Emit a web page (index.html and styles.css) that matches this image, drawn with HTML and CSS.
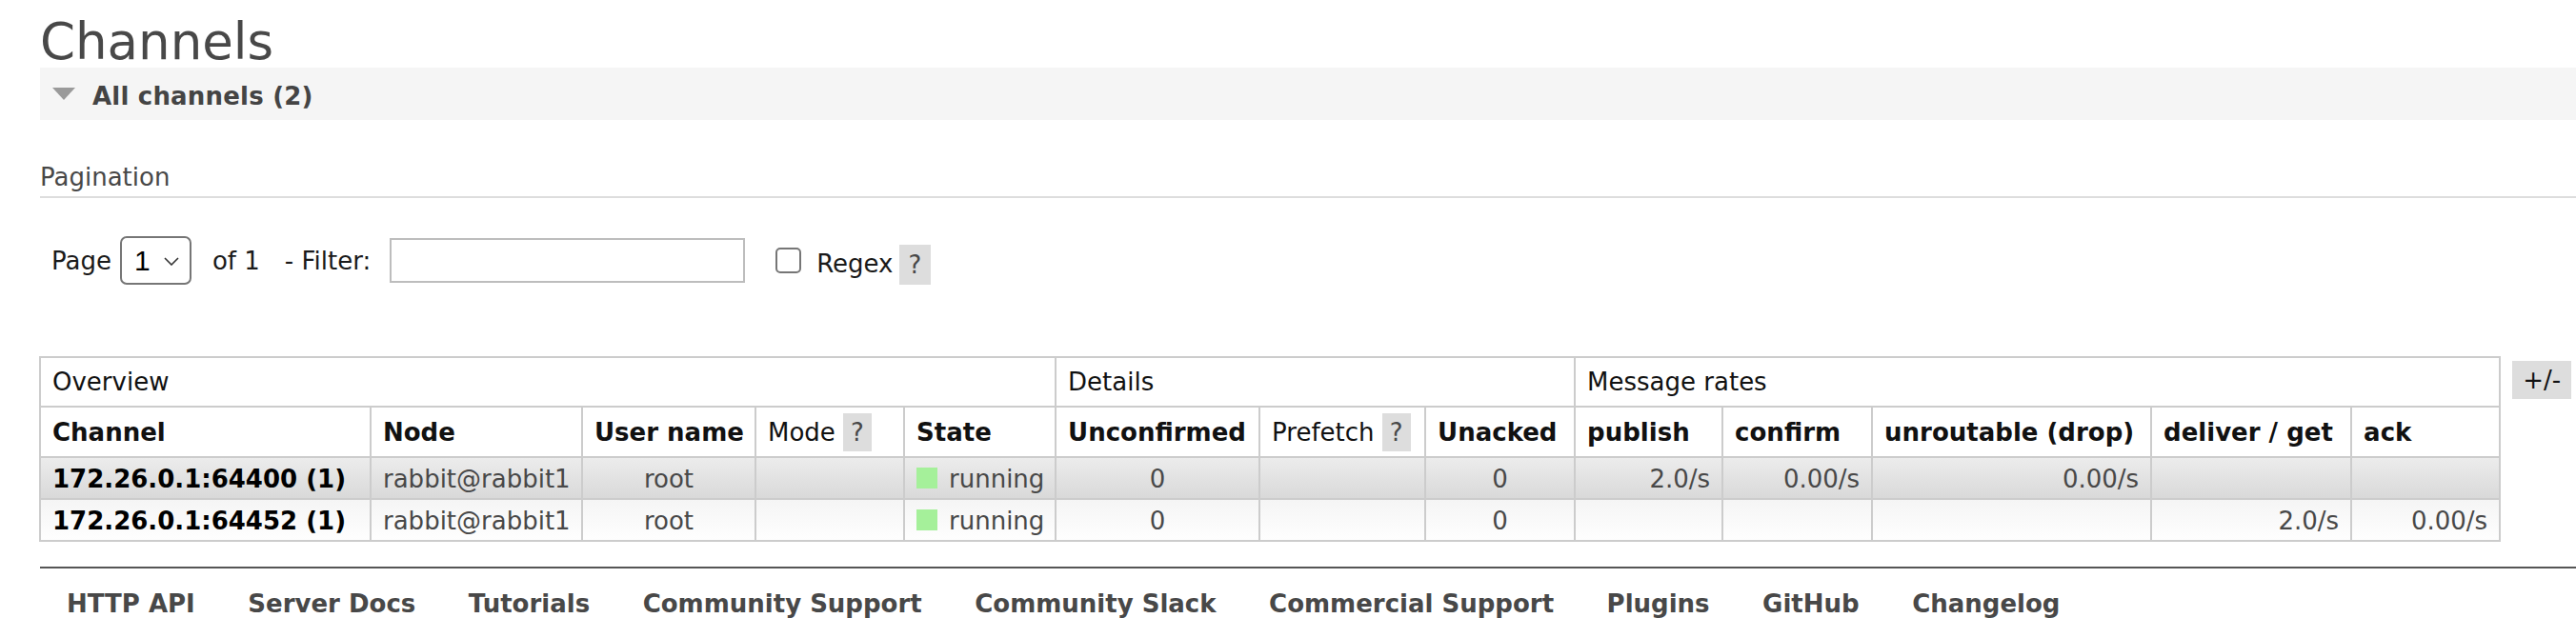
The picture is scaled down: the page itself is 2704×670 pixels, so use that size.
FILE: index.html
```html
<!DOCTYPE html>
<html lang="en">
<head>
<meta charset="utf-8">
<title>RabbitMQ Management - Channels</title>
<link rel="stylesheet" href="styles.css">
</head>
<body>
<div id="main">
  <h1>Channels</h1>
  <div class="section">
    <h2 class="section-head"><span class="tri"></span>All channels (2)</h2>
    <div class="hider">
      <h3 class="pag-title">Pagination</h3>
      <div class="pagination">
        <span class="lbl-page">Page</span>
        <span class="select"><span class="select-val">1</span><svg class="chev" width="16" height="9" viewBox="0 0 16 9"><path d="M1 1 L8 8 L15 1" fill="none" stroke="#333" stroke-width="1.6"/></svg></span>
        <span class="lbl-of">of 1</span>
        <span class="lbl-filter">- Filter:</span>
        <input type="text" class="filter">
        <input type="checkbox" class="chk">
        <span class="lbl-regex">Regex</span>
        <span class="help help-regex">?</span>
      </div>
      <div class="table-wrap">
        <table class="list">
          <colgroup>
            <col class="w-channel"><col class="w-node"><col class="w-user"><col class="w-mode"><col class="w-state">
            <col class="w-unconf"><col class="w-prefetch"><col class="w-unacked">
            <col class="w-publish"><col class="w-confirm"><col class="w-unroutable"><col class="w-deliver"><col class="w-ack">
          </colgroup>
          <thead>
            <tr class="group">
              <th colspan="5">Overview</th>
              <th colspan="3">Details</th>
              <th colspan="5">Message rates</th>
            </tr>
            <tr class="heads">
              <th>Channel</th>
              <th>Node</th>
              <th>User name</th>
              <th class="plain">Mode <span class="help">?</span></th>
              <th>State</th>
              <th>Unconfirmed</th>
              <th class="plain">Prefetch <span class="help">?</span></th>
              <th>Unacked</th>
              <th>publish</th>
              <th>confirm</th>
              <th>unroutable (drop)</th>
              <th>deliver / get</th>
              <th>ack</th>
            </tr>
          </thead>
          <tbody>
            <tr class="alt1">
              <td class="name">172.26.0.1:64400 (1)</td>
              <td>rabbit@rabbit1</td>
              <td class="c">root</td>
              <td></td>
              <td><span class="status"></span>running</td>
              <td class="c">0</td>
              <td></td>
              <td class="c">0</td>
              <td class="r">2.0/s</td>
              <td class="r">0.00/s</td>
              <td class="r">0.00/s</td>
              <td class="r"></td>
              <td class="r"></td>
            </tr>
            <tr class="alt2">
              <td class="name">172.26.0.1:64452 (1)</td>
              <td>rabbit@rabbit1</td>
              <td class="c">root</td>
              <td></td>
              <td><span class="status"></span>running</td>
              <td class="c">0</td>
              <td></td>
              <td class="c">0</td>
              <td class="r"></td>
              <td class="r"></td>
              <td class="r"></td>
              <td class="r">2.0/s</td>
              <td class="r">0.00/s</td>
            </tr>
          </tbody>
        </table>
        <span class="toggle">+/-</span>
      </div>
    </div>
  </div>
</div>
<div id="footer">
  <ul>
    <li><a href="#">HTTP API</a></li>
    <li><a href="#">Server Docs</a></li>
    <li><a href="#">Tutorials</a></li>
    <li><a href="#">Community Support</a></li>
    <li><a href="#">Community Slack</a></li>
    <li><a href="#">Commercial Support</a></li>
    <li><a href="#">Plugins</a></li>
    <li><a href="#">GitHub</a></li>
    <li><a href="#">Changelog</a></li>
  </ul>
</div>
</body>
</html>
```

FILE: styles.css
```css
html, body {
  margin: 0;
  padding: 0;
  background: #fff;
}

body {
  font-family: "DejaVu Sans", Verdana, sans-serif;
  font-size: 26px;
  line-height: 30px;
  color: #484848;
}

#main {
  padding-left: 42px;
}

h1 {
  margin: 0;
  padding-top: 16px;
  font-size: 53px;
  line-height: 55px;
  font-weight: normal;
  color: #484848;
}

.section-head {
  margin: 0;
  display: flex;
  align-items: center;
  height: 30px;
  padding: 15px 0 10px 13px;
  background: #f5f5f5;
  font-size: 26px;
  line-height: 30px;
  font-weight: bold;
  color: #444;
  letter-spacing: 0.2px;
}

.tri {
  width: 0;
  height: 0;
  border-left: 12px solid transparent;
  border-right: 12px solid transparent;
  border-top: 13px solid #9a9a9a;
  margin-right: 18px;
  margin-bottom: 5px;
}

.pag-title {
  margin: 45px 0 0;
  font-size: 26px;
  line-height: 30px;
  font-weight: normal;
  color: #484848;
  padding-bottom: 5px;
  border-bottom: 2px solid #ddd;
}

.pagination {
  display: flex;
  align-items: center;
  height: 51px;
  margin-top: 40px;
  color: #1a1a1a;
}

.lbl-page {
  margin-left: 12px;
}

.select {
  box-sizing: border-box;
  width: 75px;
  height: 51px;
  margin-left: 9px;
  border: 2px solid #767676;
  border-radius: 7px;
  display: flex;
  align-items: center;
  padding-left: 13px;
  font-family: "Liberation Sans", Arial, sans-serif;
  font-size: 30px;
  color: #000;
  background: #fff;
}

.chev {
  margin-left: 14px;
  margin-top: 2px;
}

.lbl-of {
  margin-left: 22px;
}

.lbl-filter {
  margin-left: 26px;
}

.filter {
  box-sizing: border-box;
  width: 373px;
  height: 47px;
  margin: 0 0 0 20px;
  padding: 0 8px;
  border: 2px solid #bdbdbd;
  border-radius: 0;
  font: inherit;
  background: #fff;
  outline: none;
}

.chk {
  appearance: none;
  -webkit-appearance: none;
  box-sizing: border-box;
  width: 27px;
  height: 27px;
  margin: 0 0 0 32px;
  border: 2px solid #767676;
  border-radius: 5px;
  background: #fff;
}

.lbl-regex {
  margin-left: 16px;
  margin-top: 6px;
}

.help {
  background: #ddd;
  color: #484848;
  padding: 5px 8px;
  font-weight: normal;
}

.help-regex {
  margin-left: 6px;
  padding: 6px 10px;
  margin-top: 9px;
}

.table-wrap {
  display: flex;
  align-items: flex-start;
  margin-top: 75px;
}

table.list {
  border-collapse: collapse;
  table-layout: fixed;
  width: 2584px;
  margin-left: -1px;
}

.w-channel { width: 347px; }
.w-node { width: 222px; }
.w-user { width: 182px; }
.w-mode { width: 156px; }
.w-state { width: 159px; }
.w-unconf { width: 214px; }
.w-prefetch { width: 174px; }
.w-unacked { width: 157px; }
.w-publish { width: 155px; }
.w-confirm { width: 157px; }
.w-unroutable { width: 293px; }
.w-deliver { width: 210px; }
.w-ack { width: 156px; }

table.list th,
table.list td {
  border: 2px solid #ccc;
  text-align: left;
  white-space: nowrap;
  vertical-align: top;
}

table.list td {
  padding: 7px 12px 5px;
  color: #484848;
  line-height: 30px;
}

.group th {
  padding: 10px 12px;
  font-weight: normal;
  color: #111;
  line-height: 30px;
}

.heads th {
  padding: 11px 12px 10px;
  font-weight: bold;
  color: #111;
  line-height: 30px;
}

.heads th.plain {
  font-weight: normal;
}

tr.alt1 td {
  background: linear-gradient(#ececec, #d9d9d9);
}

tr.alt2 td {
  background: linear-gradient(#f5f5f5, #fefefe);
}

table.list td.name {
  font-weight: bold;
  color: #000;
}

table.list td.c {
  text-align: center;
}

table.list td.r {
  text-align: right;
}

.status {
  display: inline-block;
  width: 22px;
  height: 22px;
  background: #a5f09a;
  margin-right: 12px;
  vertical-align: -1px;
}

.toggle {
  margin-left: 12px;
  margin-top: 5px;
  background: #ddd;
  color: #111;
  padding: 5px 11px;
  line-height: 30px;
}

#footer {
  margin: 26px 0 0 42px;
  border-top: 2px solid #555;
}

#footer ul {
  list-style: none;
  margin: 0;
  padding: 22px 0 0 28px;
  display: flex;
  gap: 55.5px;
}

#footer a {
  font-weight: bold;
  color: #484848;
  text-decoration: none;
}
```
